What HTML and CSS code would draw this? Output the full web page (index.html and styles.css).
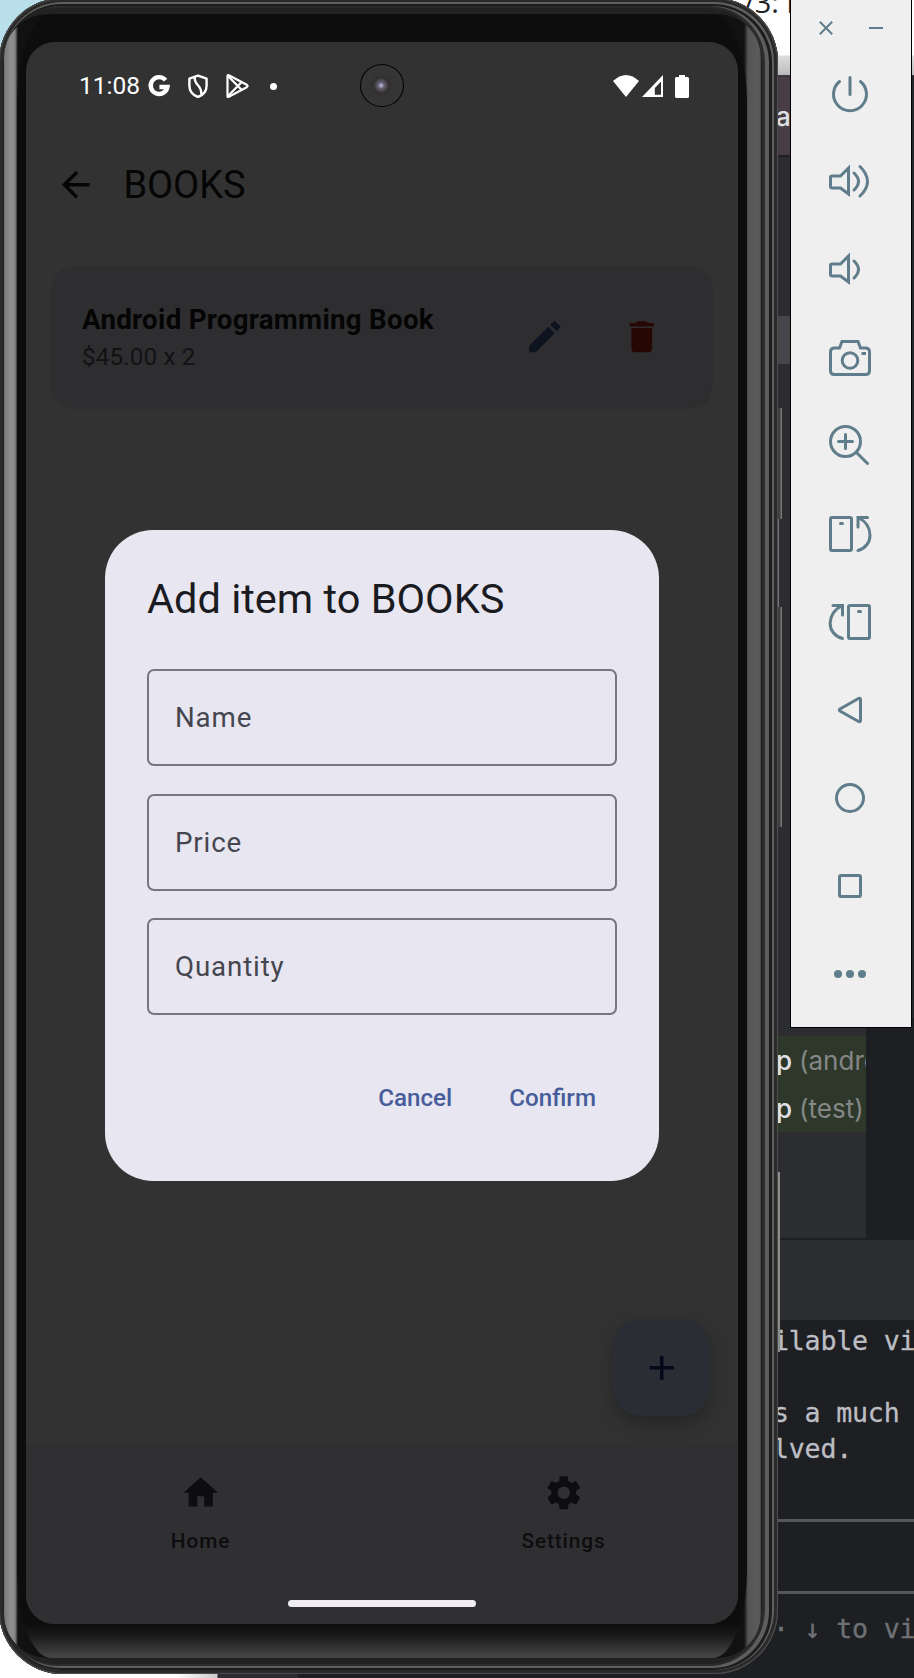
FILE: index.html
```
<!DOCTYPE html>
<html lang="en">
<head>
<meta charset="utf-8">
<title>Android Emulator</title>
<link rel="stylesheet" href="styles.css">
</head>
<body>
<div class="desktop">
  <div class="browser-strip"><span>/3: F</span></div>
  <div class="ide">
    <div class="ide-banner">a</div>
    <div class="ide-bar"></div>
    <div class="ide-tab"></div>
    <div class="ide-tree">
      <div class="ide-row">p <em>(andro</em></div>
      <div class="ide-row">p <em>(test)</em></div>
    </div>
    <div class="ide-toolbar"></div>
    <div class="ide-terminal">
      <div>ilable vi</div>
      <div>&nbsp;</div>
      <div>s a much</div>
      <div>lved.</div>
      <div class="prompt"></div>
      <div class="hint">· ↓ to vi</div>
    </div>
  </div>
  <div class="sliver"></div>
  <div class="desk-corner"></div>
  <div class="desk-bottom"></div>
  <div class="side-key key-power"></div>
  <div class="side-gap"></div>
  <div class="side-key key-volume"></div>
  <div class="side-line"></div>

  <div class="phone">
    <div class="glass">
      <div class="bezel">
        <div class="screen">
          <div class="status">
            <span class="clock">11:08</span>
            <svg class="s24" viewBox="0 0 24 24" fill="none" stroke="#fff" stroke-width="4.4"><path d="M18.6 6.2A8.4 8.4 0 1 0 20.4 13H12.4"/></svg>
            <svg class="s24 shield" viewBox="0 0 24 24" fill="none" stroke="#fff" stroke-width="2.4" stroke-linejoin="round"><path d="M12 1.7 20.6 4.6V11.500C20.600 17 17.500 21 12 23C6.500 21 3.400 17 3.400 11.500V4.600Z"/><path d="M8.800 3.200C7.500 11 16.500 11 15.300 20.600"/></svg>
            <svg class="s24 play" viewBox="0 0 24 24" fill="none" stroke="#fff" stroke-width="2.200" stroke-linejoin="round"><path d="M2.500 1.800V22.200C2.500 23 3.200 23 3.800 22.700L21.800 13.200Q23.400 12 21.800 10.800L3.800 1.300Q2.500 .8 2.500 1.800Z"/><path d="M3 2 16.500 15.800M3 22 16.500 8.200"/></svg>
            <i class="dot"></i>
            <svg class="wifi" viewBox="0 0 26 22" fill="#fff"><path d="M13 22 0 6Q13-6 26 6Z"/></svg>
            <svg class="signal" viewBox="0 0 21 22" fill="#fff"><path fill-rule="evenodd" d="M21 0V22H0ZM19 6.500 12.800 13V19.800H19Z"/></svg>
            <svg class="battery" viewBox="0 0 14 23" fill="#fff"><path d="M4 0H10V2H12.500Q14 2 14 3.500V21.500Q14 23 12.500 23H1.500Q0 23 0 21.500V3.500Q0 2 1.500 2H4Z"/></svg>
          </div>
          <div class="camera"></div>
          <div class="appbar">
            <svg class="icon" viewBox="0 0 24 24"><path d="M20 11H7.830l5.590-5.590L12 4l-8 8 8 8 1.410-1.410L7.830 13H20z"/></svg>
            <h1>BOOKS</h1>
          </div>
          <div class="card">
            <div class="card-text">
              <b>Android Programming Book</b>
              <span>$45.00 x 2</span>
            </div>
            <svg class="icon edit" viewBox="0 0 24 24"><path d="M3 17.250V21h3.750L17.810 9.940l-3.750-3.750zM20.710 7.040c.39-.39.39-1.020 0-1.410l-2.340-2.340a1 1 0 0 0-1.410 0l-1.830 1.830 3.750 3.750z"/></svg>
            <svg class="icon trash" viewBox="0 0 24 24"><path d="M6 19c0 1.100.9 2 2 2h8c1.100 0 2-.9 2-2V7H6zM19 4h-3.500l-1-1h-5l-1 1H5v2h14z"/></svg>
          </div>
          <div class="fab"><svg class="icon" viewBox="0 0 24 24"><path d="M19 13h-6v6h-2v-6H5v-2h6V5h2v6h6z"/></svg></div>
          <div class="nav">
            <div class="nav-items">
              <div class="nav-item"><svg class="icon" viewBox="0 0 24 24"><path d="M10 20v-6h4v6h5v-8h3L12 3 2 12h3v8z"/></svg><span>Home</span></div>
              <div class="nav-item"><svg class="icon" viewBox="0 0 24 24"><path d="M19.140 12.940c.04-.3.06-.61.06-.94 0-.32-.02-.64-.07-.94l2.030-1.580c.18-.14.23-.41.12-.61l-1.920-3.320c-.12-.22-.37-.29-.59-.22l-2.390.96c-.5-.38-1.030-.7-1.620-.94l-.36-2.540c-.04-.24-.24-.41-.48-.41h-3.840c-.24 0-.43.17-.47.41l-.36 2.540c-.59.24-1.130.57-1.620.94l-2.390-.96c-.22-.08-.47 0-.59.22L2.740 8.870c-.12.21-.08.47.12.61l2.030 1.580c-.05.3-.09.63-.09.94s.02.64.07.94l-2.030 1.580c-.18.14-.23.41-.12.61l1.920 3.320c.12.22.37.29.59.22l2.390-.96c.5.38 1.030.7 1.620.94l.36 2.540c.05.24.24.41.48.41h3.840c.24 0 .44-.17.47-.41l.36-2.540c.59-.24 1.130-.56 1.620-.94l2.390.96c.22.08.47 0 .59-.22l1.920-3.320c.12-.22.07-.47-.12-.61zM12 15.600a3.600 3.600 0 1 1 0-7.200 3.600 3.600 0 0 1 0 7.200z"/></svg><span>Settings</span></div>
            </div>
            <div class="handle"></div>
          </div>
          <div class="dialog">
            <h2>Add item to BOOKS</h2>
            <div class="fields">
              <div class="field">Name</div>
              <div class="field">Price</div>
              <div class="field">Quantity</div>
            </div>
            <div class="actions"><span>Cancel</span><span>Confirm</span></div>
          </div>
        </div>
      </div>
    </div>
  </div>

  <div class="toolbar">
    <div class="window-buttons">
      <svg class="wbtn" viewBox="0 0 14 14"><path d="M.8.8 13.200 13.200M13.200.8.8 13.200"/></svg>
      <svg class="wbtn" viewBox="0 0 14 14"><path d="M0 7H14"/></svg>
    </div>
    <svg class="tool" viewBox="0 0 44 44"><path d="M11.500 9.500A16.500 16.500 0 1 0 32.500 9.500M22 5.500V22.500"/></svg>
    <svg class="tool" viewBox="0 0 44 44"><path d="M2.500 17.500Q2.500 16 4 16H12.500L20.500 8V34L12.500 28H4Q2.500 28 2.500 26.500Z"/><path d="M26 13Q35 21.500 26 30M32 6.500Q47 21.500 32 36"/></svg>
    <svg class="tool" viewBox="0 0 44 44"><path d="M2.500 17.500Q2.500 16 4 16H12.500L20.500 8V34L12.500 28H4Q2.500 28 2.500 26.500Z"/><path d="M26 13Q35 21.500 26 30"/></svg>
    <svg class="tool" viewBox="0 0 44 44"><path d="M6.500 12H11.500L14 5.500H30L32.500 12H37.500Q41.500 12 41.500 16V34.500Q41.500 38.500 37.500 38.500H6.500Q2.500 38.500 2.500 34.500V16Q2.500 12 6.500 12Z"/><circle cx="22" cy="24.500" r="7.800"/><path d="M35 17.500H36.500" stroke-linecap="square"/></svg>
    <svg class="tool" viewBox="0 0 44 44"><circle cx="17.500" cy="17.500" r="15"/><path d="M28.500 28.500 39.500 39.500M10.500 17.500H24.500M17.500 10.500V24.500"/></svg>
    <svg class="tool" viewBox="0 0 44 44"><rect x="2.500" y="5.500" width="21" height="33" rx="1.500"/><path d="M12.500 11.500H14.500M30 15V5.500H39.500M30 5.500C46 13 46 34 30 38.500"/></svg>
    <svg class="tool" viewBox="0 0 44 44"><rect x="20.500" y="5.500" width="21" height="33" rx="1.500"/><path d="M30.500 11.500H32.500M14.500 15V5.500H5M14.500 5.500C-2 13-2 34 14.500 38.500"/></svg>
    <svg class="tool" viewBox="0 0 44 44"><path d="M30.500 10.500Q32.500 9.500 32.500 11.500V32.500Q32.500 34.500 30.500 33.500L12 23Q10.500 22 12 21Z"/></svg>
    <svg class="tool" viewBox="0 0 44 44"><circle cx="22" cy="22" r="13.500"/></svg>
    <svg class="tool" viewBox="0 0 44 44"><rect x="11.500" y="11.500" width="21" height="21" rx="1.500"/></svg>
    <svg class="tool solid" viewBox="0 0 44 44"><circle cx="10" cy="22" r="4"/><circle cx="22" cy="22" r="4"/><circle cx="34" cy="22" r="4"/></svg>
  </div>
</div>
</body>
</html>
```
FILE: styles.css
```
* { box-sizing: border-box; }
body { margin: 0; font-family: Roboto, sans-serif; }
h1, h2 { margin: 0; font-weight: 400; }
svg { display: block; flex: none; }

.desktop { position: relative; width: 914px; height: 1678px; overflow: hidden; background: #1e1f22; }

/* windows behind the emulator */
.browser-strip { position: absolute; left: 700px; top: 0; width: 214px; height: 76px; background: linear-gradient(#fff 0 55px, #ddd 56px, #bbb 75px); color: #222; font: 26px/30px "Open Sans", sans-serif; }
.browser-strip span { display: block; margin: -13px 0 0 44px; font-size: 29px; }
.ide { position: absolute; left: 770px; top: 75px; width: 144px; height: 1603px; display: flex; flex-direction: column; background: #1e1f22; border-top: 2px solid #393a3d; overflow: hidden; }
.ide-banner { height: 80px; background: #493d45; border-bottom: 2px solid #1e1f22; color: #dfe1e5; font: 500 26px/80px Inter, sans-serif; padding-left: 6px; }
.ide-bar { height: 159px; background: #2b2d30; }
.ide-tab { height: 48px; background: #45454c; }
.ide-tree { width: 96px; height: 874px; padding-top: 672px; background: #2b2d30; overflow: hidden; }
.ide-row { height: 48px; padding-left: 6px; background: #2d382b; color: #dfe1e5; font: 500 26px/50px Inter, sans-serif; white-space: nowrap; overflow: hidden; }
.ide-row em { font-style: normal; font-weight: 400; color: #868686; }
.ide-toolbar { height: 80px; margin-top: 2px; background: #2b2d30; }
.ide-terminal { padding-top: 3px; color: #bcbec4; font: 26.600px/36px "DejaVu Sans Mono", monospace; letter-spacing: -.2px; -webkit-text-stroke: .3px; white-space: nowrap; padding-left: 3px; }
.ide-terminal .prompt { height: 75px; margin: 52px 0 0 -4px; border: solid #55565a; border-width: 3px 0; }
.ide-terminal .hint { margin-top: 17px; color: #6f7177; }
.sliver { position: absolute; left: 912px; top: 76px; width: 2px; height: 942px; background: #26282b; }
.desk-corner { position: absolute; left: 0; top: 0; width: 60px; height: 60px; background: #b9dfea; }
.desk-bottom { position: absolute; left: 0; top: 1600px; width: 298px; height: 78px; background: linear-gradient(90deg, #fff 0 175px, #ccc 217px, #2b2d30 218px); }
.side-key { position: absolute; left: 770px; width: 12px; background: linear-gradient(90deg, #333 8px, #4a4a4a 10px, #888 12px); }
.key-power { top: 408px; height: 111px; }
.key-volume { top: 607px; height: 220px; }
.side-gap { position: absolute; left: 776px; top: 519px; width: 3px; height: 88px; background: #777; }
.side-line { position: absolute; left: 777px; top: 1172px; width: 3px; height: 180px; background: #8d8c89; }

/* phone body */
.phone { position: absolute; left: -1px; top: -2px; width: 779px; height: 1676px; padding: 16px 17px 16px 5px; border-radius: 64px; background: #222; box-shadow: inset 0 0 1px 1px #505050, inset 0 0 0 4px #292929, inset -1px 1px 0 5px #606060, inset -2px 1px 0 7px #1c1c1c, inset -5px 0 0 8px #5e5e5e, inset -6px 0 1px 10px #2c2c2c; }
.glass { height: 1644px; padding: 0 14px 0 13px; border-radius: 44px; background: linear-gradient(90deg, #777, #909090 7px, #858585 11px, #111 14px, #111 740px, #555 744px, #5b5b5b 755px, #444); overflow: hidden; }
.bezel { height: 1644px; padding: 28px 9px 0; border-radius: 34px / 90px; background: linear-gradient(#0d0d0d 1610px, #1b1b1b 1622px, #454545 1643px); }
.screen { position: relative; display: flex; flex-direction: column; width: 712px; height: 1582px; border-radius: 29px; background: #323232; overflow: hidden; color: #050505; }

.status { display: flex; align-items: center; height: 88px; padding: 0 49px 0 53px; flex: none; }
.clock { width: 67.500px; color: #fff; font-size: 24.500px; line-height: 1; }
.s24 { width: 24px; height: 24px; }
.shield { margin-left: 15px; }
.play { margin-left: 15px; }
.dot { width: 7px; height: 7px; margin-left: 21px; border-radius: 50%; background: #fff; }
.wifi { width: 26px; height: 22px; margin-left: auto; }
.signal { width: 21px; height: 22px; margin-left: 3px; }
.battery { width: 14px; height: 23px; margin-left: 12px; }
.camera { position: absolute; left: 334px; top: 22px; width: 44px; height: 43px; border: 1.500px solid #000; border-radius: 50%; background: radial-gradient(circle at 48% 50%, #a8a8c0 0 1px, #66627a 3px, #464044 6px, #302e30 8px, #343434 10px, #383838); }

.icon { width: 41.500px; height: 41.500px; fill: currentColor; }
.appbar { display: flex; align-items: center; height: 110px; padding-left: 28.500px; gap: 27.500px; flex: none; }
.appbar h1 { font-size: 38px; line-height: 44px; letter-spacing: -.1px; }
.card { display: flex; align-items: center; height: 140px; margin: 27px 26px 0; padding-left: 30px; border-radius: 21px; background: #2e2e30; flex: none; box-shadow: 0 1px 2px #2d2d2d; }
.card-text { flex: 1; display: flex; flex-direction: column; }
.card-text b { font-size: 27.700px; line-height: 41px; font-weight: 700; letter-spacing: .28px; }
.card-text span { font-size: 24.200px; line-height: 35px; color: #121214; letter-spacing: .15px; }
.edit { color: #0e1320; }
.trash { margin: 0 50px 0 55px; color: #270703; }

.fab { display: flex; align-items: center; justify-content: center; width: 97px; height: 97px; margin: auto 28px 28px auto; border-radius: 28px; background: #2b2d35; color: #050a1a; box-shadow: 0 8px 16px #262626; flex: none; }
.nav { height: 180px; background: #303032; color: #0d0d0f; flex: none; }
.nav-items { display: flex; gap: 14px; height: 156px; padding-top: 28px; }
.nav-item { flex: 1; display: flex; flex-direction: column; align-items: center; font-size: 20.800px; line-height: 28px; font-weight: 500; letter-spacing: .9px; gap: 13px; }
.handle { width: 188px; height: 7px; margin: 0 auto; border-radius: 4px; background: #f0edf0; }

.dialog { position: absolute; left: 79px; top: 488px; width: 554px; height: 651px; padding: 42px; border-radius: 48px; background: #e8e6f0; color: #1a1b21; }
.dialog h2 { font-size: 41.500px; line-height: 53px; }
.fields { display: flex; flex-direction: column; gap: 27.500px; margin-top: 44px; }
.field { height: 97px; padding-left: 26px; border: 2px solid #757780; border-radius: 7px; color: #45464f; font-size: 27.700px; line-height: 93px; letter-spacing: .87px; }
.actions { display: flex; justify-content: flex-end; gap: 57px; margin-top: 66px; padding-right: 21px; color: #475d9b; font-size: 24.200px; line-height: 34px; font-weight: 500; }

/* emulator controls */
.toolbar { position: absolute; left: 790px; top: -1px; width: 122px; height: 1029px; display: flex; flex-direction: column; align-items: center; gap: 44px; border: 1px solid #000; background: #efefef; }
.window-buttons { display: flex; gap: 36px; height: 28px; padding-top: 21px; }
.wbtn { width: 14px; height: 14px; stroke: #607d8b; stroke-width: 2; fill: none; }
.tool { width: 44px; height: 44px; margin-left: -2px; fill: none; stroke: #607d8b; stroke-width: 3; stroke-linecap: round; }
.solid { fill: #607d8b; stroke: none; }
```
